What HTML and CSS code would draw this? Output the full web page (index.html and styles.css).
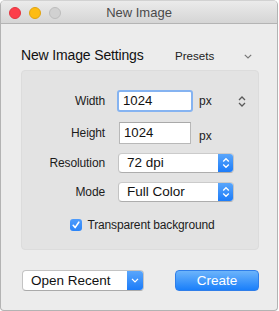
FILE: index.html
```html
<!DOCTYPE html>
<html>
<head>
<meta charset="utf-8">
<link rel="stylesheet" href="styles.css">
</head>
<body>
<div class="window">
  <div class="titlebar">
    <div class="lights">
      <span class="light red"></span>
      <span class="light yellow"></span>
      <span class="light gray"></span>
    </div>
    <div class="title">New Image</div>
    <div></div>
  </div>
  <div class="content">
    <div class="heading-row">
      <div class="heading">New Image Settings</div>
      <div class="presets">
        <span>Presets</span>
        <svg class="chev" width="8" height="5" viewBox="0 0 8 5"><path d="M0.8 0.8 L4 4 L7.2 0.8" fill="none" stroke="#7a7a7a" stroke-width="1.2"/></svg>
      </div>
    </div>
    <div class="panel">
      <div class="row row-width">
        <div class="label">Width</div>
        <div class="field focused">1024</div>
        <div class="unit">px</div>
        <svg class="link" width="8" height="11" viewBox="0 0 8 11"><path d="M1 4 L4 1 L7 4 M1 7 L4 10 L7 7" fill="none" stroke="#5a5a5a" stroke-width="1.3"/></svg>
      </div>
      <div class="row row-height">
        <div class="label">Height</div>
        <div class="field">1024</div>
        <div class="unit unit-low">px</div>
      </div>
      <div class="row row-select">
        <div class="label">Resolution</div>
        <div class="select">
          <span class="select-text">72 dpi</span>
          <span class="stepper"><svg width="8" height="12" viewBox="0 0 8 12"><path d="M1.2 4.5 L4 1.7 L6.8 4.5 M1.2 7.5 L4 10.3 L6.8 7.5" fill="none" stroke="#fff" stroke-width="1.3"/></svg></span>
        </div>
      </div>
      <div class="row row-select">
        <div class="label">Mode</div>
        <div class="select">
          <span class="select-text">Full Color</span>
          <span class="stepper"><svg width="8" height="12" viewBox="0 0 8 12"><path d="M1.2 4.5 L4 1.7 L6.8 4.5 M1.2 7.5 L4 10.3 L6.8 7.5" fill="none" stroke="#fff" stroke-width="1.3"/></svg></span>
        </div>
      </div>
      <div class="check-row">
        <span class="checkbox"><svg width="12" height="12" viewBox="0 0 12 12"><path d="M3.2 6.3 L5.1 8.6 L8.8 3.2" fill="none" stroke="#fff" stroke-width="1.6" stroke-linecap="round" stroke-linejoin="round"/></svg></span>
        <span class="check-label">Transparent background</span>
      </div>
    </div>
    <div class="bottom-row">
      <div class="popup">
        <span class="popup-text">Open Recent</span>
        <span class="popup-arrow"><svg width="8" height="5" viewBox="0 0 8 5"><path d="M1 0.9 L4 3.9 L7 0.9" fill="none" stroke="#fff" stroke-width="1.3"/></svg></span>
      </div>
      <div class="button">Create</div>
    </div>
  </div>
</div>
</body>
</html>
```
FILE: styles.css
```css
html, body {
  margin: 0;
  padding: 0;
  background: #ffffff;
}
body {
  font-family: "Liberation Sans", Arial, sans-serif;
  color: #1b1b1b;
}
.window {
  box-sizing: border-box;
  width: 278px;
  height: 311px;
  border: 1px solid #b3b3b3;
  border-top-color: #d2d2d2;
  border-radius: 5px 5px 4px 4px;
  background: #ececec;
  overflow: hidden;
  display: flex;
  flex-direction: column;
}
.titlebar {
  height: 22px;
  border-bottom: 1px solid #b4b4b4;
  background: linear-gradient(#ebebeb, #d5d5d5);
  display: grid;
  grid-template-columns: 1fr auto 1fr;
  align-items: start;
}
.lights {
  display: flex;
  gap: 8px;
  padding: 6px 0 0 8px;
}
.light {
  box-sizing: border-box;
  width: 12px;
  height: 12px;
  border-radius: 50%;
}
.red { background: #fd3e4b; border: 1px solid #e2353f; }
.yellow { background: #fdbc13; border: 1px solid #e0a311; }
.gray { background: #d1d1d1; border: 1px solid #bdbdbd; }
.title {
  font-size: 13px;
  line-height: 16px;
  padding-top: 4px;
  color: #4a4a4a;
}
.content {
  padding: 23px 18px 19px 20px;
  display: flex;
  flex-direction: column;
}
.heading-row {
  display: flex;
  align-items: baseline;
  height: 16px;
  margin-bottom: 7px;
}
.heading {
  font-size: 14px;
  line-height: 16px;
  letter-spacing: -0.15px;
  color: #111;
}
.presets {
  margin-left: auto;
  margin-right: 7px;
  width: 77px;
  display: flex;
  justify-content: space-between;
  align-items: center;
  font-size: 11.6px;
  color: #222;
}
.chev { margin-top: 1px; }
.panel {
  box-sizing: border-box;
  height: 180px;
  border: 1px solid #dcdcdc;
  border-radius: 4px;
  background: #e3e3e3;
  padding: 19px 0 0 0;
  display: flex;
  flex-direction: column;
}
.row {
  display: flex;
  align-items: center;
}
.label {
  width: 83px;
  text-align: right;
  font-size: 12px;
  letter-spacing: -0.12px;
  line-height: 15px;
  color: #1c1c1c;
  margin-right: 14px;
}
.row-width { height: 22px; }
.row-height { height: 22px; margin-top: 10px; align-items: stretch; }
.row-height .label { align-self: center; margin-top: 1px; }
.row-select { height: 20px; margin-top: 9px; }
.row-select + .row-select { margin-top: 9px; }
.field {
  box-sizing: border-box;
  width: 72px;
  height: 22px;
  background: #fff;
  border: 1px solid #b8b8b8;
  border-top-color: #a9a9a9;
  font-size: 13.2px;
  line-height: 20px;
  padding-left: 4px;
  color: #111;
}
.field.focused {
  width: 76px;
  margin-left: -2px;
  border: 2px solid #85b3f1;
  border-radius: 3px;
  padding-left: 4px;
  line-height: 18px;
}
.unit {
  font-size: 12px;
  line-height: 15px;
  margin-left: 8px;
  color: #1c1c1c;
}
.row-width .unit { margin-left: 6px; }
.unit-low { align-self: flex-end; }
.link { margin-left: 26px; }
.select {
  box-sizing: border-box;
  width: 116px;
  height: 20px;
  margin-left: -1px;
  display: flex;
  background: #fff;
  border: 1px solid #c3c3c3;
  border-top-color: #cbcbcb;
  border-bottom-color: #adadad;
  border-radius: 4px;
  overflow: hidden;
}
.select-text {
  flex: 1;
  font-size: 13.5px;
  line-height: 18px;
  padding-left: 8px;
  color: #111;
}
.stepper {
  width: 15px;
  display: flex;
  align-items: center;
  justify-content: center;
  background: linear-gradient(#5aa6fb, #1c7cf9);
}
.check-row {
  margin-top: 17px;
  display: flex;
  align-items: center;
  justify-content: center;
  padding-left: 5px;
  height: 12px;
}
.checkbox {
  box-sizing: border-box;
  width: 12px;
  height: 12px;
  border-radius: 3px;
  background: linear-gradient(#4f9cfb, #2a84f9);
  display: flex;
}
.check-label {
  margin-left: 5px;
  font-size: 12px;
  letter-spacing: -0.15px;
  line-height: 15px;
  color: #1c1c1c;
}
.bottom-row {
  margin-top: 20px;
  display: flex;
  justify-content: space-between;
}
.popup {
  box-sizing: border-box;
  width: 122px;
  height: 21px;
  margin-left: 1px;
  display: flex;
  background: #fff;
  border: 1px solid #c3c3c3;
  border-bottom-color: #aaaaaa;
  border-radius: 4px;
  overflow: hidden;
}
.popup-text {
  flex: 1;
  font-size: 13.5px;
  line-height: 19px;
  padding-left: 8px;
  color: #111;
}
.popup-arrow {
  width: 16px;
  display: flex;
  align-items: center;
  justify-content: center;
  background: linear-gradient(#5aa6fb, #1c7cf9);
}
.button {
  box-sizing: border-box;
  width: 84px;
  height: 21px;
  border: 1px solid #2f7ee9;
  border-radius: 4px;
  background: linear-gradient(#6cb4fb, #1a7ffa);
  color: #fff;
  font-size: 13.5px;
  line-height: 19px;
  text-align: center;
}
```
